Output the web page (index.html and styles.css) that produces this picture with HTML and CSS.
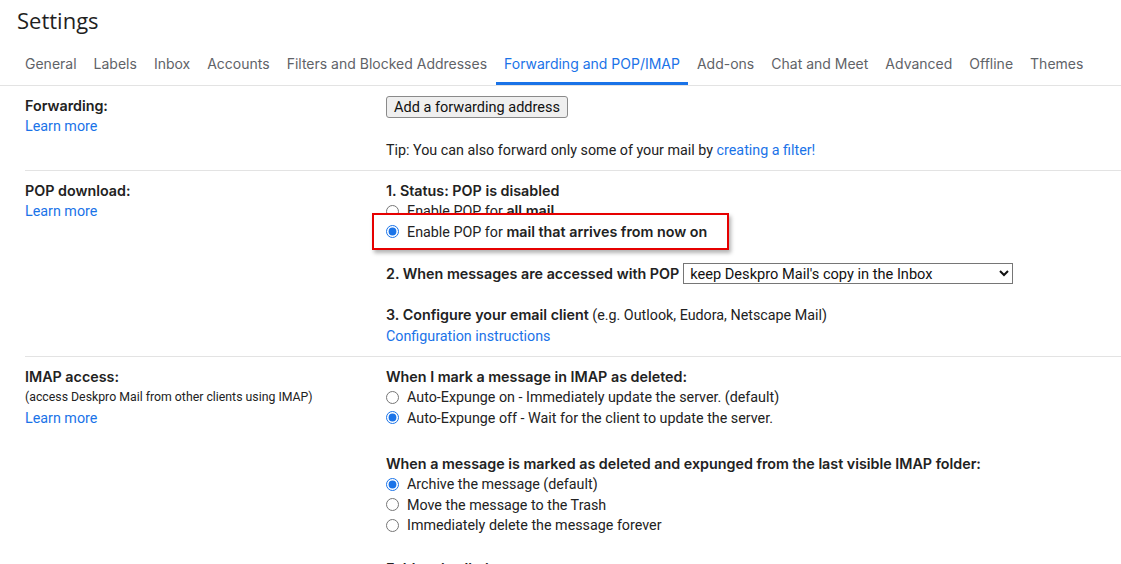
FILE: index.html
```html
<!DOCTYPE html>
<html>
<head>
<meta charset="utf-8">
<link rel="stylesheet" href="styles.css">
</head>
<body>
<div class="page">
  <h1 class="title">Settings</h1>
  <nav class="tabs">
    <a class="tab">General</a>
    <a class="tab">Labels</a>
    <a class="tab">Inbox</a>
    <a class="tab">Accounts</a>
    <a class="tab">Filters and Blocked Addresses</a>
    <a class="tab active">Forwarding and POP/IMAP</a>
    <a class="tab">Add-ons</a>
    <a class="tab">Chat and Meet</a>
    <a class="tab">Advanced</a>
    <a class="tab">Offline</a>
    <a class="tab">Themes</a>
  </nav>
  <div class="rows">
    <section class="row">
      <div class="label">
        <div class="label-title">Forwarding:</div>
        <a class="link">Learn more</a>
      </div>
      <div class="content">
        <button class="btn">Add a forwarding address</button>
        <p class="tip">Tip: You can also forward only some of your mail by <a class="link">creating a filter!</a></p>
      </div>
    </section>
    <section class="row">
      <div class="label">
        <div class="label-title">POP download:</div>
        <a class="link">Learn more</a>
      </div>
      <div class="content">
        <div class="group">
          <div class="heading">1. Status: POP is disabled</div>
          <label class="opt"><input type="radio" name="pop"><span>Enable POP for <b>all mail</b></span></label>
          <div class="highlight"><label class="opt"><input type="radio" name="pop" checked><span>Enable POP for <b>mail that arrives from now on</b></span></label></div>
        </div>
        <div class="group select-row">
          <span class="heading">2. When messages are accessed with POP</span>
          <select class="sel"><option>keep Deskpro Mail's copy in the Inbox</option></select>
        </div>
        <div class="group">
          <div><b>3. Configure your email client</b> (e.g. Outlook, Eudora, Netscape Mail)</div>
          <a class="link">Configuration instructions</a>
        </div>
      </div>
    </section>
    <section class="row last">
      <div class="label">
        <div class="label-title">IMAP access:</div>
        <div class="small">(access Deskpro Mail from other clients using IMAP)</div>
        <a class="link">Learn more</a>
      </div>
      <div class="content">
        <div class="group">
          <div class="heading">When I mark a message in IMAP as deleted:</div>
          <label class="opt"><input type="radio" name="exp"><span>Auto-Expunge on - Immediately update the server. (default)</span></label>
          <label class="opt"><input type="radio" name="exp" checked><span>Auto-Expunge off - Wait for the client to update the server.</span></label>
        </div>
        <div class="group spaced">
          <div class="heading">When a message is marked as deleted and expunged from the last visible IMAP folder:</div>
          <label class="opt"><input type="radio" name="del" checked><span>Archive the message (default)</span></label>
          <label class="opt"><input type="radio" name="del"><span>Move the message to the Trash</span></label>
          <label class="opt"><input type="radio" name="del"><span>Immediately delete the message forever</span></label>
        </div>
        <div class="group next">
          <div class="heading">Folder size limits</div>
        </div>
      </div>
    </section>
  </div>
</div>
</body>
</html>
```
FILE: styles.css
```css
html, body {
  margin: 0;
  padding: 0;
  background: #fff;
}
body {
  font-family: Roboto, "Liberation Sans", Arial, sans-serif;
  font-size: 14.3px;
  color: #222;
  overflow: hidden;
}
.title {
  margin: 0;
  padding: 6px 17px 0;
  font-size: 22px;
  line-height: 28px;
  font-weight: 400;
  color: #1f1f1f;
  font-family: "Open Sans", Roboto, sans-serif;
}
.tabs {
  display: flex;
  margin-top: 11px;
  padding-left: 17px;
  border-bottom: 1px solid #e3e3e3;
  gap: 1px;
}
.tab {
  display: block;
  padding: 9px 8px 8px;
  line-height: 20px;
  font-family: Inter, Roboto, sans-serif;
  font-size: 14px;
  color: #5f6368;
  border-bottom: 3px solid transparent;
  white-space: nowrap;
}
.tab.active {
  color: #1a73e8;
  border-bottom-color: #1a73e8;
}
.rows {
  margin-left: 25px;
}
.row {
  display: grid;
  grid-template-columns: 361px 1fr;
  padding: 9px 0 9px;
  border-bottom: 1px solid #e3e3e3;
  line-height: 21px;
}
.row.last {
  border-bottom: none;
}
.label-title,
.heading,
b {
  font-family: Inter, Roboto, sans-serif;
  font-size: 14.3px;
  font-weight: 600;
  color: #222;
}
b {
  line-height: 1;
}
.small {
  font-size: 12.3px;
}
.link {
  color: #1a73e8;
  text-decoration: none;
}
.btn {
  display: block;
  height: 22px;
  margin-top: 1px;
  padding: 0 7px;
  font-family: Roboto, "Liberation Sans", sans-serif;
  font-size: 14.5px;
  color: #111;
  background: #efefef;
  border: 1px solid #8a8a8a;
  border-radius: 3px;
}
.tip {
  margin: 22px 0 0;
}
.group + .group {
  margin-top: 21px;
}
.group.spaced {
  margin-top: 25px;
}
.group.next {
  margin-top: 22px;
}
.opt {
  display: flex;
  align-items: center;
  line-height: 20.5px;
}
.opt input {
  width: 13px;
  height: 13px;
  margin: 0 8px 0 0;
  accent-color: #1a73e8;
}
.highlight {
  position: relative;
}
.highlight::before {
  content: "";
  position: absolute;
  left: -14px;
  top: -9px;
  width: 357px;
  height: 37px;
  box-sizing: border-box;
  border: 2px solid #e60000;
  background: #fff;
  box-shadow: 2px 3px 4px rgba(0, 0, 0, 0.3);
}
.highlight .opt {
  position: relative;
  z-index: 1;
}
.select-row {
  display: flex;
  align-items: center;
  gap: 4px;
  height: 21px;
}
.sel {
  width: 330px;
  height: 21px;
  font-family: Roboto, "Liberation Sans", sans-serif;
  font-size: 14.6px;
  color: #111;
  border: 1px solid #767676;
  border-radius: 0;
  background: #fff;
  padding: 0 2px;
}
```
